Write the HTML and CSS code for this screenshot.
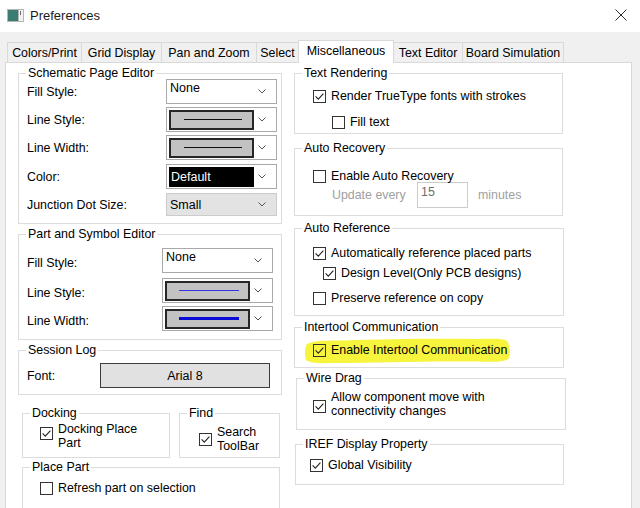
FILE: index.html
```html
<!DOCTYPE html>
<html>
<head>
<meta charset="utf-8">
<title>Preferences</title>
<link rel="stylesheet" href="styles.css">
</head>
<body>
<div class="window">
  <div class="titlebar">
    <svg class="appicon" width="17" height="13" viewBox="0 0 17 13">
      <rect x="0" y="0" width="17" height="13" fill="#b5b5b5"/>
      <rect x="1" y="1" width="10" height="11" fill="#3b7c70"/>
      <rect x="12" y="1" width="4" height="11" fill="#f2f2f2"/>
      <rect x="13" y="2" width="1" height="4" fill="#6f6f6f"/>
    </svg>
    <span class="title">Preferences</span>
    <svg class="close" width="12" height="12" viewBox="0 0 12 12">
      <path d="M0.5 0.5L11.5 11.5M11.5 0.5L0.5 11.5" stroke="#2b2b2b" stroke-width="1" fill="none"/>
    </svg>
  </div>

  <div class="dialog">
    <div class="tabs">
      <div class="tab t1">Colors/Print</div>
      <div class="tab t2">Grid Display</div>
      <div class="tab t3">Pan and Zoom</div>
      <div class="tab t4">Select</div>
      <div class="tab t5 active">Miscellaneous</div>
      <div class="tab t6">Text Editor</div>
      <div class="tab t7">Board Simulation</div>
    </div>

    <div class="panel">
      <div class="col col-left">

        <div class="group g-schem">
          <div class="legend">Schematic Page Editor</div>
          <div class="frow r1">
            <span class="flabel">Fill Style:</span>
            <div class="combo"><span class="ctext">None</span><svg class="chev" width="8" height="5" viewBox="0 0 8 5"><path d="M0.5 0.5L4 4L7.5 0.5" fill="none" stroke="#555" stroke-width="1"/></svg></div>
          </div>
          <div class="frow r2">
            <span class="flabel">Line Style:</span>
            <div class="combo"><span class="swatch gray"><i class="ln thin"></i></span><svg class="chev" width="8" height="5" viewBox="0 0 8 5"><path d="M0.5 0.5L4 4L7.5 0.5" fill="none" stroke="#555" stroke-width="1"/></svg></div>
          </div>
          <div class="frow r3">
            <span class="flabel">Line Width:</span>
            <div class="combo"><span class="swatch gray"><i class="ln thin"></i></span><svg class="chev" width="8" height="5" viewBox="0 0 8 5"><path d="M0.5 0.5L4 4L7.5 0.5" fill="none" stroke="#555" stroke-width="1"/></svg></div>
          </div>
          <div class="frow r4">
            <span class="flabel">Color:</span>
            <div class="combo"><span class="swatch black">Default</span><svg class="chev" width="8" height="5" viewBox="0 0 8 5"><path d="M0.5 0.5L4 4L7.5 0.5" fill="none" stroke="#555" stroke-width="1"/></svg></div>
          </div>
          <div class="frow r5">
            <span class="flabel">Junction Dot Size:</span>
            <div class="combo disabled"><span class="ctext mid">Small</span><svg class="chev" width="8" height="5" viewBox="0 0 8 5"><path d="M0.5 0.5L4 4L7.5 0.5" fill="none" stroke="#555" stroke-width="1"/></svg></div>
          </div>
        </div>

        <div class="group g-part">
          <div class="legend">Part and Symbol Editor</div>
          <div class="frow p1">
            <span class="flabel low">Fill Style:</span>
            <div class="combo"><span class="ctext">None</span><svg class="chev" width="8" height="5" viewBox="0 0 8 5"><path d="M0.5 0.5L4 4L7.5 0.5" fill="none" stroke="#555" stroke-width="1"/></svg></div>
          </div>
          <div class="frow p2">
            <span class="flabel low">Line Style:</span>
            <div class="combo"><span class="swatch gray"><i class="ln blue-thin"></i></span><svg class="chev" width="8" height="5" viewBox="0 0 8 5"><path d="M0.5 0.5L4 4L7.5 0.5" fill="none" stroke="#555" stroke-width="1"/></svg></div>
          </div>
          <div class="frow p3">
            <span class="flabel low">Line Width:</span>
            <div class="combo"><span class="swatch gray"><i class="ln blue-thick"></i></span><svg class="chev" width="8" height="5" viewBox="0 0 8 5"><path d="M0.5 0.5L4 4L7.5 0.5" fill="none" stroke="#555" stroke-width="1"/></svg></div>
          </div>
        </div>

        <div class="group g-log">
          <div class="legend">Session Log</div>
          <div class="frow s1">
            <span class="flabel">Font:</span>
            <div class="button">Arial 8</div>
          </div>
        </div>

        <div class="pair">
          <div class="group g-dock">
            <div class="legend">Docking</div>
            <div class="cbrow multi">
              <span class="cb"><svg viewBox="0 0 11 11"><path d="M1.6 5.4L4.3 8.1L9.4 2.6" fill="none" stroke="#222" stroke-width="1.1"/></svg></span>
              <span class="cbtext">Docking Place<br>Part</span>
            </div>
          </div>
          <div class="group g-find">
            <div class="legend">Find</div>
            <div class="cbrow multi">
              <span class="cb"><svg viewBox="0 0 11 11"><path d="M1.6 5.4L4.3 8.1L9.4 2.6" fill="none" stroke="#222" stroke-width="1.1"/></svg></span>
              <span class="cbtext">Search<br>ToolBar</span>
            </div>
          </div>
        </div>

        <div class="group g-place">
          <div class="legend">Place Part</div>
          <div class="cbrow">
            <span class="cb"></span>
            <span class="cbtext">Refresh part on selection</span>
          </div>
        </div>

      </div>

      <div class="col col-right">

        <div class="group g-text">
          <div class="legend">Text Rendering</div>
          <div class="cbrow tr1">
            <span class="cb"><svg viewBox="0 0 11 11"><path d="M1.6 5.4L4.3 8.1L9.4 2.6" fill="none" stroke="#222" stroke-width="1.1"/></svg></span>
            <span class="cbtext">Render TrueType fonts with strokes</span>
          </div>
          <div class="cbrow tr2">
            <span class="cb"></span>
            <span class="cbtext">Fill text</span>
          </div>
        </div>

        <div class="group g-recov">
          <div class="legend">Auto Recovery</div>
          <div class="cbrow ar1">
            <span class="cb"></span>
            <span class="cbtext">Enable Auto Recovery</span>
          </div>
          <div class="update">
            <span class="dimtext uplabel">Update every</span>
            <span class="numbox">15</span>
            <span class="dimtext minutes">minutes</span>
          </div>
        </div>

        <div class="group g-ref">
          <div class="legend">Auto Reference</div>
          <div class="cbrow rf1">
            <span class="cb"><svg viewBox="0 0 11 11"><path d="M1.6 5.4L4.3 8.1L9.4 2.6" fill="none" stroke="#222" stroke-width="1.1"/></svg></span>
            <span class="cbtext">Automatically reference placed parts</span>
          </div>
          <div class="cbrow rf2">
            <span class="cb"><svg viewBox="0 0 11 11"><path d="M1.6 5.4L4.3 8.1L9.4 2.6" fill="none" stroke="#222" stroke-width="1.1"/></svg></span>
            <span class="cbtext">Design Level(Only PCB designs)</span>
          </div>
          <div class="cbrow rf3">
            <span class="cb"></span>
            <span class="cbtext">Preserve reference on copy</span>
          </div>
        </div>

        <div class="group g-inter">
          <div class="legend">Intertool Communication</div>
          <svg class="highlight" width="207" height="27" viewBox="0 0 207 27">
            <path d="M3 7 C8 4 20 3 40 3.5 C80 2 130 1.5 170 2 C188 2 198 1 203 4 C206 8 206.5 16 205 21 C201 25.5 190 25 170 24.5 C120 24 70 25.5 30 26 C15 26.5 5 26 2 23 C0.5 18 0.5 11 3 7 Z" fill="#f6f43c"/>
          </svg>
          <div class="cbrow in1">
            <span class="cb clear"><svg viewBox="0 0 11 11"><path d="M1.6 5.4L4.3 8.1L9.4 2.6" fill="none" stroke="#222" stroke-width="1.1"/></svg></span>
            <span class="cbtext">Enable Intertool Communication</span>
          </div>
        </div>

        <div class="group g-wire">
          <div class="legend">Wire Drag</div>
          <div class="cbrow multi">
            <span class="cb"><svg viewBox="0 0 11 11"><path d="M1.6 5.4L4.3 8.1L9.4 2.6" fill="none" stroke="#222" stroke-width="1.1"/></svg></span>
            <span class="cbtext">Allow component move with<br>connectivity changes</span>
          </div>
        </div>

        <div class="group g-iref">
          <div class="legend">IREF Display Property</div>
          <div class="cbrow ir1">
            <span class="cb"><svg viewBox="0 0 11 11"><path d="M1.6 5.4L4.3 8.1L9.4 2.6" fill="none" stroke="#222" stroke-width="1.1"/></svg></span>
            <span class="cbtext">Global Visibility</span>
          </div>
        </div>

      </div>
    </div>
  </div>
</div>
</body>
</html>
```

FILE: styles.css
```css
* { box-sizing: border-box; }

html, body {
  margin: 0;
  padding: 0;
}

body {
  width: 640px;
  height: 508px;
  overflow: hidden;
  background: #ffffff;
  font-family: "Liberation Sans", Arial, sans-serif;
  font-size: 12.4px;
  color: #000;
}

.window {
  width: 640px;
  height: 508px;
  display: flex;
  flex-direction: column;
}

/* ---------- title bar ---------- */
.titlebar {
  height: 32px;
  flex: none;
  display: flex;
  align-items: center;
  padding-left: 7px;
  background: #ffffff;
}

.appicon {
  margin-top: -2px;
  flex: none;
}

.title {
  margin-left: 6px;
  margin-top: -2px;
  font-size: 13px;
  color: #1a1a1a;
}

.close {
  margin-left: auto;
  margin-right: 13px;
  margin-top: -3px;
}

/* ---------- dialog ---------- */
.dialog {
  flex: 1;
  background: #f0f0f0;
  padding: 8px 8px 0 5px;
  display: flex;
  flex-direction: column;
}

.tabs {
  height: 22px;
  display: flex;
  align-items: flex-end;
  padding-left: 2px;
  position: relative;
  z-index: 2;
}

.tab {
  height: 20px;
  margin-bottom: 0;
  border: 1px solid #d9d9d9;
  border-bottom: none;
  background: #f0f0f0;
  font-size: 12.4px;
  color: #000;
  display: flex;
  align-items: center;
  justify-content: center;
  padding-top: 1px;
  margin-left: -1px;
  white-space: nowrap;
}

.t1 { width: 75px; margin-left: 0; }
.t2 { width: 81px; }
.t3 { width: 96px; }
.t4 { width: 43px; }
.t5 { width: 96px; }
.t6 { width: 70px; }
.t7 { width: 102px; }

.tab.active {
  height: 23px;
  margin-bottom: -1px;
  background: #ffffff;
  padding-top: 0;
  padding-bottom: 3px;
  position: relative;
  z-index: 3;
}

.panel {
  flex: 1;
  background: #ffffff;
  border: 1px solid #d9d9d9;
  border-bottom: none;
  padding: 10px 0 0 12px;
  display: flex;
  gap: 12px;
  position: relative;
  z-index: 1;
}

.col {
  display: flex;
  flex-direction: column;
}

.col-left { width: 264px; }
.col-right { width: 271px; }

/* ---------- group boxes ---------- */
.group {
  border: 1px solid #dcdcdc;
  position: relative;
  flex: none;
}

.legend {
  width: fit-content;
  margin: -8px 0 0 7px;
  padding: 0 2px;
  background: #ffffff;
  line-height: 14px;
  height: 14px;
  white-space: nowrap;
  position: relative;
  z-index: 1;
}

.g-schem { height: 151px; }
.g-part  { height: 106px; margin-top: 10px; }
.g-log   { height: 45px;  margin-top: 10px; }

.pair {
  display: flex;
  gap: 9px;
  margin-top: 18px;
  margin-left: 4px;
}

.g-dock { width: 148px; height: 45px; }
.g-find { width: 101px; height: 45px; }

.g-place { width: 258px; height: 60px; margin-top: 9px; margin-left: 4px; }

.g-text  { width: 269px; height: 61px; }
.g-recov { width: 269px; height: 68px; margin-top: 14px; }
.g-ref   { width: 270px; height: 88px; margin-top: 12px; }
.g-inter { width: 270px; height: 41px; margin-top: 11px; }
.g-wire  { width: 270px; height: 52px; margin-top: 10px; margin-left: 2px; }
.g-iref  { width: 269px; height: 41px; margin-top: 14px; margin-left: 1px; }

/* ---------- form rows (combos) ---------- */
.frow {
  display: flex;
  align-items: center;
  height: 25px;
}

.flabel {
  flex: none;
  padding-left: 8px;
  white-space: nowrap;
}

.g-schem .flabel { width: 147px; }
.g-part .flabel { width: 143px; }
.g-log .flabel { width: 81px; }

.flabel.low { margin-top: 5px; }

.r1 { margin-top: -1px; }
.r2 { margin-top: 3px; }
.r3 { margin-top: 3px; }
.r4 { margin-top: 4px; }
.r5 { margin-top: 4px; height: 23px; }

.p1 { margin-top: 7px; }
.p2 { margin-top: 5px; }
.p3 { margin-top: 3px; }

.s1 { margin-top: 6px; }

.combo {
  width: 111px;
  height: 100%;
  border: 1px solid #a9a9a9;
  background: #ffffff;
  display: flex;
  align-items: center;
  padding-left: 2px;
}

.combo.disabled {
  background: #e3e3e3;
  border-color: #cccccc;
}

.ctext {
  align-self: flex-start;
  margin-top: 1px;
  padding-left: 1px;
  line-height: 14px;
  font-size: 12.5px;
}

.ctext.mid {
  align-self: center;
  margin-top: 1px;
}

.swatch {
  width: 85px;
  height: 20px;
  display: flex;
  align-items: center;
  justify-content: center;
  flex: none;
}

.swatch.gray {
  background: #c2c2c2;
  border: 2px solid #262626;
}

.swatch.black {
  background: #000000;
  color: #ffffff;
  justify-content: flex-start;
  padding-left: 2px;
  font-size: 12.5px;
  line-height: 14px;
}

.ln {
  display: block;
  width: 58px;
  margin-left: 2px;
}

.ln.thin { height: 1px; background: #111111; }
.ln.blue-thin { height: 1px; background: #3535e6; width: 60px; }
.ln.blue-thick { height: 3px; background: #0b0bd6; width: 60px; }

.chev {
  margin-left: auto;
  margin-right: 10px;
  flex: none;
}

.button {
  width: 170px;
  height: 25px;
  background: #e1e1e1;
  border: 1px solid #3c3c3c;
  display: flex;
  align-items: center;
  justify-content: center;
  font-size: 12.5px;
}

/* ---------- checkboxes ---------- */
.cbrow {
  display: flex;
  align-items: center;
  height: 14px;
  position: relative;
  z-index: 1;
  white-space: nowrap;
}

.cb {
  width: 13px;
  height: 13px;
  border: 1px solid #333333;
  background: #ffffff;
  flex: none;
  margin-right: 5px;
  display: flex;
}

.cb svg {
  width: 11px;
  height: 11px;
}

.cb.clear { background: transparent; }

.cbtext {
  line-height: 14px;
}

.cbrow.multi {
  align-items: flex-start;
  height: 28px;
}

.g-dock .cbrow { margin-top: 2px; padding-left: 17px; }
.g-dock .cb { margin-top: 5px; }

.g-find .cbrow { margin-top: 5px; padding-left: 19px; }
.g-find .cb { margin-top: 8px; }

.g-place .cbrow { margin-top: 7px; padding-left: 17px; }

.tr1 { margin-top: 9px; padding-left: 18px; }
.tr2 { margin-top: 12px; padding-left: 37px; }

.ar1 { margin-top: 14px; padding-left: 18px; }

.update {
  display: flex;
  align-items: center;
  height: 26px;
  margin-top: -1px;
  padding-left: 37px;
}

.dimtext {
  color: #a0a0a0;
  white-space: nowrap;
}

.uplabel { width: 85px; }

.numbox {
  width: 51px;
  height: 26px;
  border: 1px solid #cccccc;
  background: #ffffff;
  color: #6d6d6d;
  padding-left: 3px;
  padding-top: 2px;
  line-height: 14px;
  font-size: 12.5px;
}

.minutes { margin-left: 10px; }

.rf1 { margin-top: 11px; padding-left: 18px; }
.rf2 { margin-top: 6px; padding-left: 28px; }
.rf3 { margin-top: 11px; padding-left: 18px; }

.in1 { margin-top: 9px; padding-left: 18px; }

.highlight {
  position: absolute;
  left: 9px;
  top: 9px;
  z-index: 0;
}

.g-wire .cbrow { margin-top: 5px; padding-left: 16px; }
.g-wire .cb { margin-top: 10px; }

.ir1 { margin-top: 7px; padding-left: 14px; }
```
